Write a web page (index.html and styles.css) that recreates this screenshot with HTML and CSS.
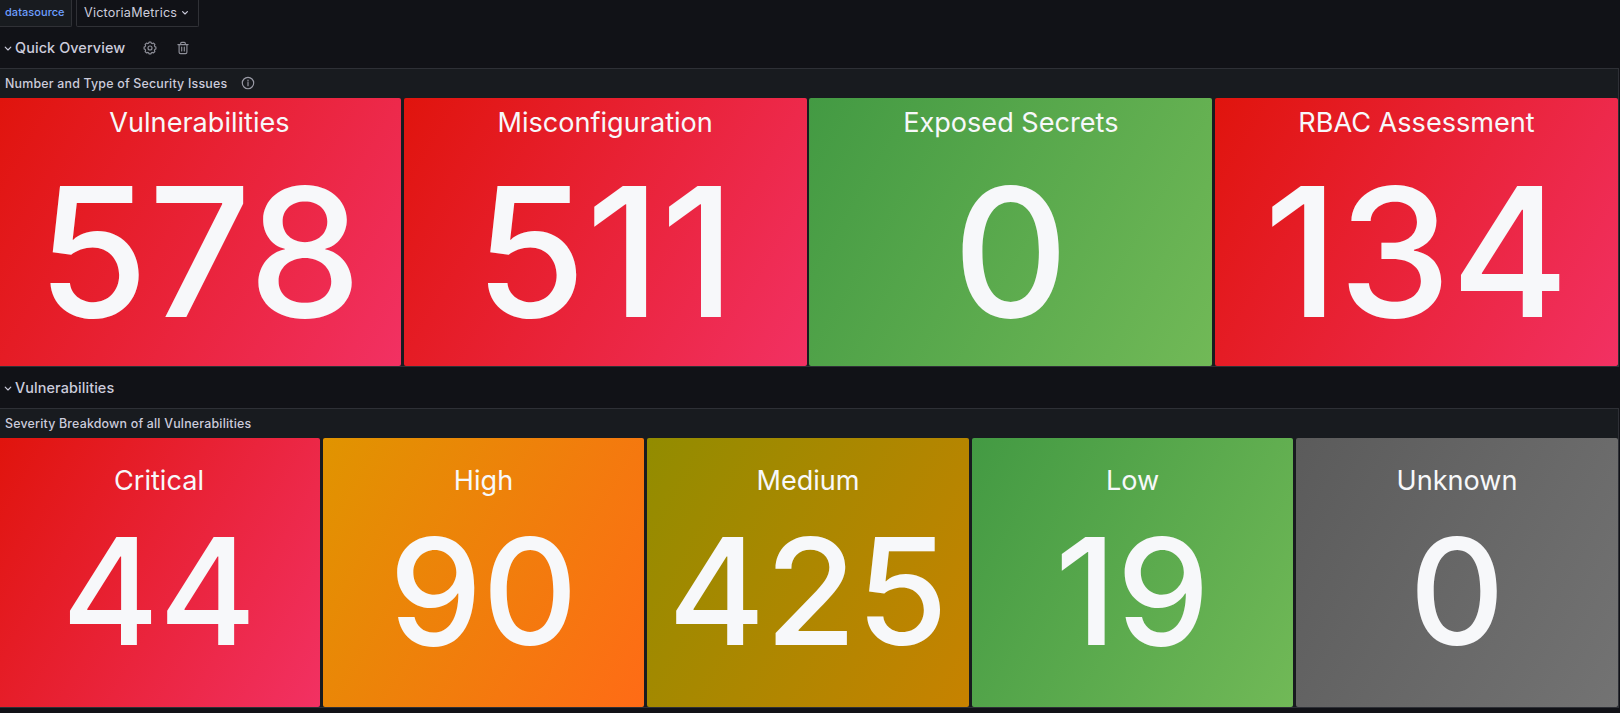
FILE: index.html
```html
<!DOCTYPE html>
<html lang="en">
<head>
<meta charset="utf-8">
<title>Security Overview</title>
<link rel="stylesheet" href="styles.css">
</head>
<body>
<div class="variables">
  <div class="var-label">datasource</div>
  <div class="var-value">VictoriaMetrics
    <svg width="8" height="6" viewBox="0 0 8 6" class="stroke"><path d="M1.6 1.6 4 4 6.4 1.6"/></svg>
  </div>
</div>
<div class="row-head">
  <svg class="chevron stroke" width="8" height="6" viewBox="0 0 8 6"><path d="M1.2 1.2 4 4 6.8 1.2"/></svg>
  <span class="row-title">Quick Overview</span>
  <svg class="row-icon gear stroke" width="14" height="14" viewBox="0 0 14 14"><path d="M5.6 2.2 6 1.1h2l.4 1.1 1 .4 1.1-.5 1.4 1.4-.5 1.1.4 1 1.1.4v2l-1.1.4-.4 1 .5 1.1-1.4 1.4-1.1-.5-1 .4-.4 1.1H6l-.4-1.1-1-.4-1.1.5-1.4-1.4.5-1.1-.4-1L1.100 8V6l1.100-.4.4-1-.5-1.100 1.400-1.400 1.100.5z"/><circle cx="7" cy="7" r="2"/></svg>
  <svg class="row-icon trash stroke" width="14" height="14" viewBox="0 0 14 14"><path d="M1.900 3.600h10.200M4.700 3.400V2.300q0-1 1-1h2.600q1 0 1 1v1.100M3.100 3.800v7.400q0 1.400 1.400 1.400h5q1.400 0 1.400-1.400V3.800M5.700 6v4M8.300 6v4"/></svg>
</div>
<section class="panel">
  <header class="panel-head">Number and Type of Security Issues
    <svg class="info stroke" width="14" height="14" viewBox="0 0 14 14"><circle cx="7" cy="7" r="5.700"/><path d="M7 6.400v3.300M7 4.100v.9"/></svg>
  </header>
  <div class="tiles four">
    <div class="tile red"><div class="name">Vulnerabilities</div><div class="value">578</div></div>
    <div class="tile red"><div class="name">Misconfiguration</div><div class="value">511</div></div>
    <div class="tile green"><div class="name">Exposed Secrets</div><div class="value">0</div></div>
    <div class="tile red"><div class="name">RBAC Assessment</div><div class="value">134</div></div>
  </div>
</section>
<div class="row-head second">
  <svg class="chevron stroke" width="8" height="6" viewBox="0 0 8 6"><path d="M1.2 1.2 4 4 6.8 1.2"/></svg>
  <span class="row-title">Vulnerabilities</span>
</div>
<section class="panel">
  <header class="panel-head">Severity Breakdown of all Vulnerabilities</header>
  <div class="tiles five">
    <div class="tile red"><div class="name">Critical</div><div class="value">44</div></div>
    <div class="tile orange"><div class="name">High</div><div class="value">90</div></div>
    <div class="tile olive"><div class="name">Medium</div><div class="value">425</div></div>
    <div class="tile green"><div class="name">Low</div><div class="value">19</div></div>
    <div class="tile gray"><div class="name">Unknown</div><div class="value">0</div></div>
  </div>
</section>
</body>
</html>
```
FILE: styles.css
```css
* { box-sizing: border-box; }
body {
  margin: 0;
  width: 1620px;
  height: 713px;
  overflow: hidden;
  background: #111217;
  color: #ccccdc;
  font-family: Inter, sans-serif;
}
.stroke { fill: none; stroke: currentColor; stroke-width: 1.15; stroke-linecap: round; stroke-linejoin: round; }
.variables { display: flex; gap: 4px; height: 27px; }
.var-label, .var-value { display: flex; align-items: center; border: 1px solid #303136; border-top: 0; }
.var-label {
  width: 72px;
  padding: 0 0 2px 5px;
  border-left: 0;
  border-radius: 0 0 2px 0;
  background: #181b1f;
  color: #6e9fff;
  font-size: 11px;
  font-weight: 500;
  letter-spacing: 0.05px;
}
.var-value { width: 123px; padding: 0 0 1px 7px; gap: 4px; font-size: 12.6px; letter-spacing: 0.2px; border-radius: 0 0 2px 2px; }
.row-head { display: flex; align-items: center; height: 41px; padding: 0 0 1px 4px; }
.row-head.second { padding-bottom: 0; }
.chevron { margin: 3px 3px 0 0; }
.row-title { width: 111px; font-size: 14.4px; font-weight: 500; letter-spacing: 0.1px; white-space: nowrap; }
.row-icon { color: #8e8f99; margin-top: 1px; }
.gear { margin-left: 17px; }
.trash { margin-left: 19px; }
.panel { width: 1619px; border: 1px solid #2e3036; border-left: 0; background: #181b1f; }
.panel-head {
  display: flex;
  align-items: center;
  height: 29px;
  padding: 0 0 1px 5px;
  font-size: 12.4px;
  font-weight: 550;
  letter-spacing: 0.2px;
}
.info { margin-left: 14px; color: #9a9ba6; }
.tiles { display: grid; }
.four { grid-template-columns: 401px 403px 403px 403px; column-gap: 2.67px; height: 268px; }
.five { grid-template-columns: 320px 321px 322px 321px 322px; column-gap: 3px; height: 269px; }
.tile { border-radius: 2px; color: #f7f8fa; text-align: center; }
.tile:first-child { border-radius: 0 2px 2px 0; }
.tile:first-child .name, .tile:first-child .value { margin-left: -2px; }
.name { font-size: 27.1px; line-height: 34px; padding-top: 8px; }
.value { font-weight: 500; }
.four .value { font-size: 179.6px; line-height: 216px; margin-top: 4px; }
.five .name { padding-top: 26px; }
.five .value { font-size: 148.2px; line-height: 178px; margin-top: 4px; }
.red { background: linear-gradient(120deg, #e0140d, #f23163); }
.green { background: linear-gradient(120deg, #439a43, #71b957); }
.orange { background: linear-gradient(120deg, #e09400, #ff6b16); }
.olive { background: linear-gradient(120deg, #928c00, #c78200); }
.gray { background: linear-gradient(120deg, #5b5b5b, #737373); }
```
